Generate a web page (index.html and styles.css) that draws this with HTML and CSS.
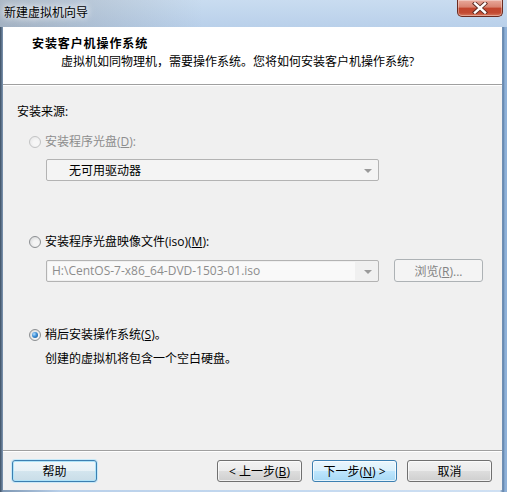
FILE: index.html
```html
<!DOCTYPE html>
<html lang="zh-CN">
<head>
    <meta charset="UTF-8">
    <title>新建虚拟机向导</title>
    <link rel="stylesheet" href="styles.css">
</head>
<body>

    <div class="window">
        <div class="titlebar">
            <span class="title">新建虚拟机向导</span>
            <span class="close-btn">
                <svg width="16" height="12" viewBox="0 0 16 12">
                    <path d="M3 1.5 L13 10.5 M13 1.5 L3 10.5" stroke="#5a2a22" stroke-width="4.2" stroke-linecap="square"/>
                    <path d="M3 1.5 L13 10.5 M13 1.5 L3 10.5" stroke="#ffffff" stroke-width="2.4" stroke-linecap="square"/>
                </svg>
            </span>
        </div>

        <div class="client">
            <!-- 标题区 -->
            <div class="header">
                <h1>安装客户机操作系统</h1>
                <p>虚拟机如同物理机，需要操作系统。您将如何安装客户机操作系统?</p>
            </div>

            <div class="content">
                <div class="section-label">安装来源:</div>

                <div class="option disabled">
                    <span class="radio"></span>
                    <span>安装程序光盘(<u>D</u>):</span>
                </div>
                <div class="combo combo-drive">
                    <span class="combo-text">无可用驱动器</span>
                    <span class="arrow"></span>
                </div>

                <div class="option option-iso">
                    <span class="radio"></span>
                    <span>安装程序光盘映像文件(iso)(<u>M</u>):</span>
                </div>
                <div class="iso-row">
                    <div class="combo combo-iso">
                        <span class="combo-text">H:\CentOS-7-x86_64-DVD-1503-01.iso</span>
                        <span class="arrow"></span>
                    </div>
                    <button class="btn btn-browse" disabled>浏览(<u>R</u>)...</button>
                </div>

                <div class="option option-later">
                    <span class="radio checked"></span>
                    <span>稍后安装操作系统(<u>S</u>)。</span>
                </div>
                <p class="desc">创建的虚拟机将包含一个空白硬盘。</p>
            </div>

            <!-- 底部按钮 -->
            <div class="footer">
                <button class="btn btn-help">帮助</button>
                <div class="nav">
                    <button class="btn">&lt; 上一步(<u>B</u>)</button>
                    <button class="btn btn-default">下一步(<u>N</u>) &gt;</button>
                    <button class="btn">取消</button>
                </div>
            </div>
        </div>
    </div>

</body>
</html>
```

FILE: styles.css
```css
body {
    margin: 0;
    font-family: "Open Sans", "Noto Sans CJK SC", sans-serif;
    font-size: 12px;
    color: #000;
}
.window {
    width: 507px;
    height: 492px;
    background: linear-gradient(to right, #3d4f63 0px, #7f98b4 3px, #b9d0ea 60px, #c4d9f0 300px, #cfe0f3 500px, #5d7fa6 503px, #8fb1d8 505px);
    overflow: hidden;
}
.titlebar {
    height: 27px;
    display: flex;
    justify-content: space-between;
    align-items: flex-start;
    background: linear-gradient(to right, rgba(120, 120, 120, 0.35), rgba(200, 215, 230, 0) 40%),
                linear-gradient(#c9dcf0, #b9d0ea);
}
.title {
    padding: 5px 0 0 4px;
    line-height: 16px;
    text-shadow: 0 0 6px #fff, 0 0 10px #fff;
}
/* 关闭按钮 */
.close-btn {
    width: 46px;
    height: 17px;
    margin-right: 4px;
    box-sizing: border-box;
    border: 1px solid #6b2b20;
    border-top: none;
    border-radius: 0 0 5px 5px;
    background: linear-gradient(#e9a99b 0%, #d8826f 45%, #c2452d 50%, #c24a32 80%, #d77a5f 100%);
    display: flex;
    align-items: center;
    justify-content: center;
    box-shadow: inset 0 0 0 1px rgba(255, 255, 255, 0.35);
}
.client {
    margin-left: 3px;
    width: 499px;
    height: 463px;
    background-color: #f0f0f0;
    display: flex;
    flex-direction: column;
}
.header {
    height: 58px;
    box-sizing: border-box;
    padding-top: 9px;
    background-color: #fff;
    border-bottom: 1px solid #a0a0a0;
    box-shadow: 0 1px 0 #fff;
}
.header h1 {
    margin: 0 0 2px 29px;
    font-size: 12px;
    font-weight: bold;
    line-height: 16px;
    letter-spacing: 0.9px;
}
.header p {
    margin: 0 0 0 58px;
    line-height: 16px;
}
.content {
    flex: 1;
    padding: 19px 0 0 14px;
}
.section-label {
    line-height: 16px;
}
.option {
    display: flex;
    align-items: center;
    gap: 4px;
    margin: 14px 0 0 12px;
    line-height: 16px;
}
.option.disabled {
    color: #8d8d8d;
}
.option-iso {
    margin-top: 53px;
}
.option-later {
    margin-top: 45px;
}
/* 单选按钮 */
.radio {
    width: 12px;
    height: 12px;
    box-sizing: border-box;
    border-radius: 50%;
    border: 1px solid #8c8f92;
    background: radial-gradient(circle at 60% 60%, #f4f4f4 30%, #cfd1d3 100%);
    position: relative;
}
.disabled .radio {
    border-color: #c2c3c4;
    background: radial-gradient(circle at 60% 60%, #f6f6f6 30%, #e2e3e4 100%);
}
.radio.checked::after {
    content: "";
    position: absolute;
    left: 2px;
    top: 2px;
    width: 6px;
    height: 6px;
    border-radius: 50%;
    background: radial-gradient(circle at 35% 35%, #b7e0ff 0%, #3c8ed6 45%, #18508a 100%);
}
.combo {
    height: 22px;
    box-sizing: border-box;
    border: 1px solid #b3b3b3;
    border-radius: 2px;
    display: flex;
    align-items: center;
    position: relative;
}
.combo-drive {
    width: 333px;
    margin: 9px 0 0 29px;
    background-color: #f4f4f4;
}
.combo-drive .combo-text {
    padding-left: 22px;
}
.combo-iso {
    width: 333px;
    background-color: #f0f0f0;
    color: #8d8d8d;
}
.combo-iso .combo-text {
    width: 307px;
    height: 18px;
    line-height: 18px;
    margin-left: 1px;
    padding-left: 4px;
    box-sizing: border-box;
    background-color: #f9f9f9;
    white-space: nowrap;
}
.arrow {
    position: absolute;
    right: 6px;
    top: 9px;
    border-left: 4px solid transparent;
    border-right: 4px solid transparent;
    border-top: 4px solid #9a9a9a;
}
.iso-row {
    display: flex;
    align-items: center;
    gap: 15px;
    margin: 9px 0 0 29px;
}
.desc {
    margin: 8px 0 0 28px;
    line-height: 16px;
}
.footer {
    border-top: 1px solid #a0a0a0;
    box-shadow: inset 0 1px 0 #fff;
    padding: 9px 10px 8px 9px;
    display: flex;
    justify-content: space-between;
}
.nav {
    display: flex;
    gap: 10px;
}
/* 按钮 */
.btn {
    width: 85px;
    height: 22px;
    padding: 0;
    font-family: inherit;
    font-size: 12px;
    color: #000;
    border: 1px solid #707070;
    border-radius: 3px;
    background: linear-gradient(#f2f2f2 0%, #ebebeb 50%, #dddddd 51%, #cfcfcf 100%);
    box-shadow: inset 0 0 0 1px rgba(255, 255, 255, 0.7);
}
.btn-default {
    border-color: #3c7fb1;
    background: linear-gradient(#eaf6fd 0%, #d9f0fc 50%, #bee6fd 51%, #a7d9f5 100%);
}
.btn-help {
    border-color: #3c7fb1;
    box-shadow: 0 0 0 1px #c8e9f8, inset 0 0 0 1px #aee3f8;
    background: linear-gradient(#f0f7fa 0%, #e7f1f6 50%, #d3e5ee 51%, #c9dde8 100%);
}
.btn-browse {
    width: 89px;
    height: 23px;
    color: #838383;
    border-color: #adb2b5;
    background: #f4f4f4;
    box-shadow: none;
}
```
